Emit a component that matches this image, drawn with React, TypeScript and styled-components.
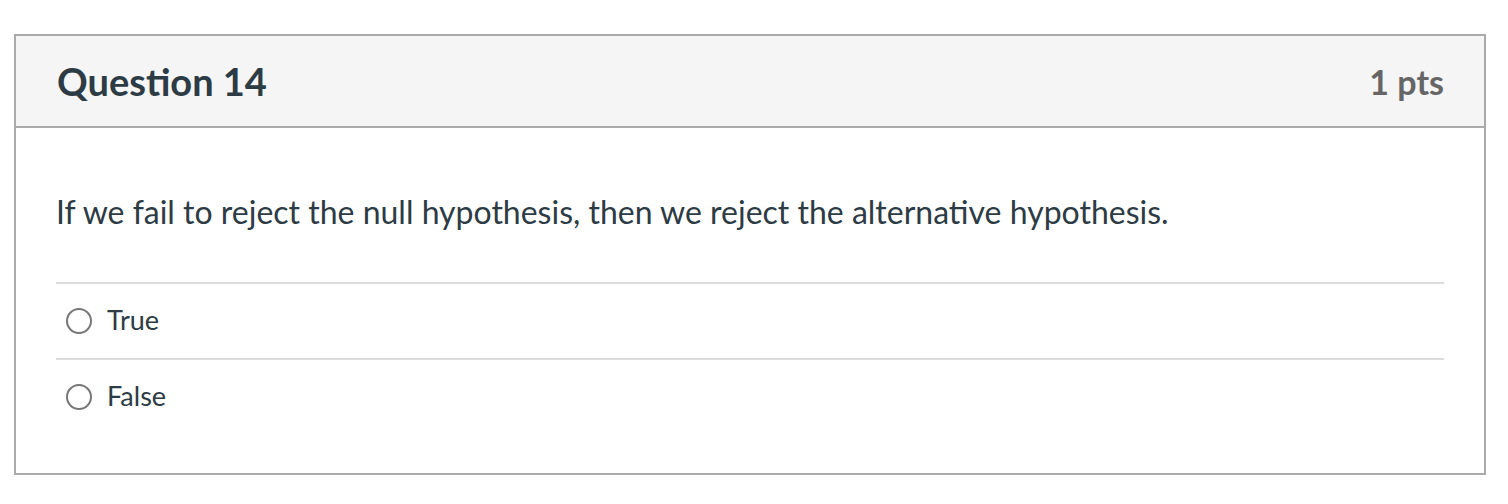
import styled, { createGlobalStyle } from "styled-components";

const GlobalStyle = createGlobalStyle`
  html, body {
    margin: 0;
    padding: 0;
    background: #ffffff;
    font-family: Lato, "Noto Sans", "Liberation Sans", sans-serif;
  }
`;

const answers = ["True", "False"];

export default function App() {
  return (
    <>
      <GlobalStyle />
      <St.Page>
        <St.Card>
          <St.Header>
            <St.Title>Question 14</St.Title>
            <St.Points>1 pts</St.Points>
          </St.Header>
          <St.Body>
            <St.QuestionText>
              If we fail to reject the null hypothesis, then we reject the alternative hypothesis.
            </St.QuestionText>
            <St.AnswerList>
              {answers.map((a) => (
                <St.Answer key={a}>
                  <St.Radio />
                  <St.AnswerLabel>{a}</St.AnswerLabel>
                </St.Answer>
              ))}
            </St.AnswerList>
          </St.Body>
        </St.Card>
      </St.Page>
    </>
  );
}

const St = {
  Page: styled.main`
    padding: 34px 0 0 14px;
  `,
  Card: styled.section`
    width: 1472px;
    box-sizing: border-box;
    border: 2px solid #aaaaaa;
  `,
  Header: styled.header`
    height: 92px;
    box-sizing: border-box;
    display: flex;
    align-items: center;
    justify-content: space-between;
    padding: 0 40px 0 41px;
    background-color: #f5f5f5;
    border-bottom: 2px solid #aaaaaa;
  `,
  Title: styled.h2`
    margin: 0;
    font-size: 38px;
    font-weight: 700;
    color: #2d3b45;
  `,
  Points: styled.span`
    font-size: 34px;
    font-weight: 700;
    color: #666666;
  `,
  Body: styled.div`
    padding: 63px 40px 39px;
  `,
  QuestionText: styled.p`
    margin: 0 0 49px;
    font-size: 32px;
    line-height: 42px;
    color: #2d3b45;
  `,
  AnswerList: styled.div`
    display: flex;
    flex-direction: column;
  `,
  Answer: styled.label`
    height: 76px;
    box-sizing: border-box;
    display: flex;
    align-items: center;
    border-top: 2px solid #dddddd;
    padding-left: 10px;
  `,
  Radio: styled.span`
    width: 26px;
    height: 26px;
    box-sizing: border-box;
    border-radius: 50%;
    border: 2px solid #777777;
    background: #ffffff;
    flex-shrink: 0;
  `,
  AnswerLabel: styled.span`
    margin-left: 15px;
    padding-bottom: 4px;
    font-size: 27px;
    color: #2d3b45;
  `,
};
